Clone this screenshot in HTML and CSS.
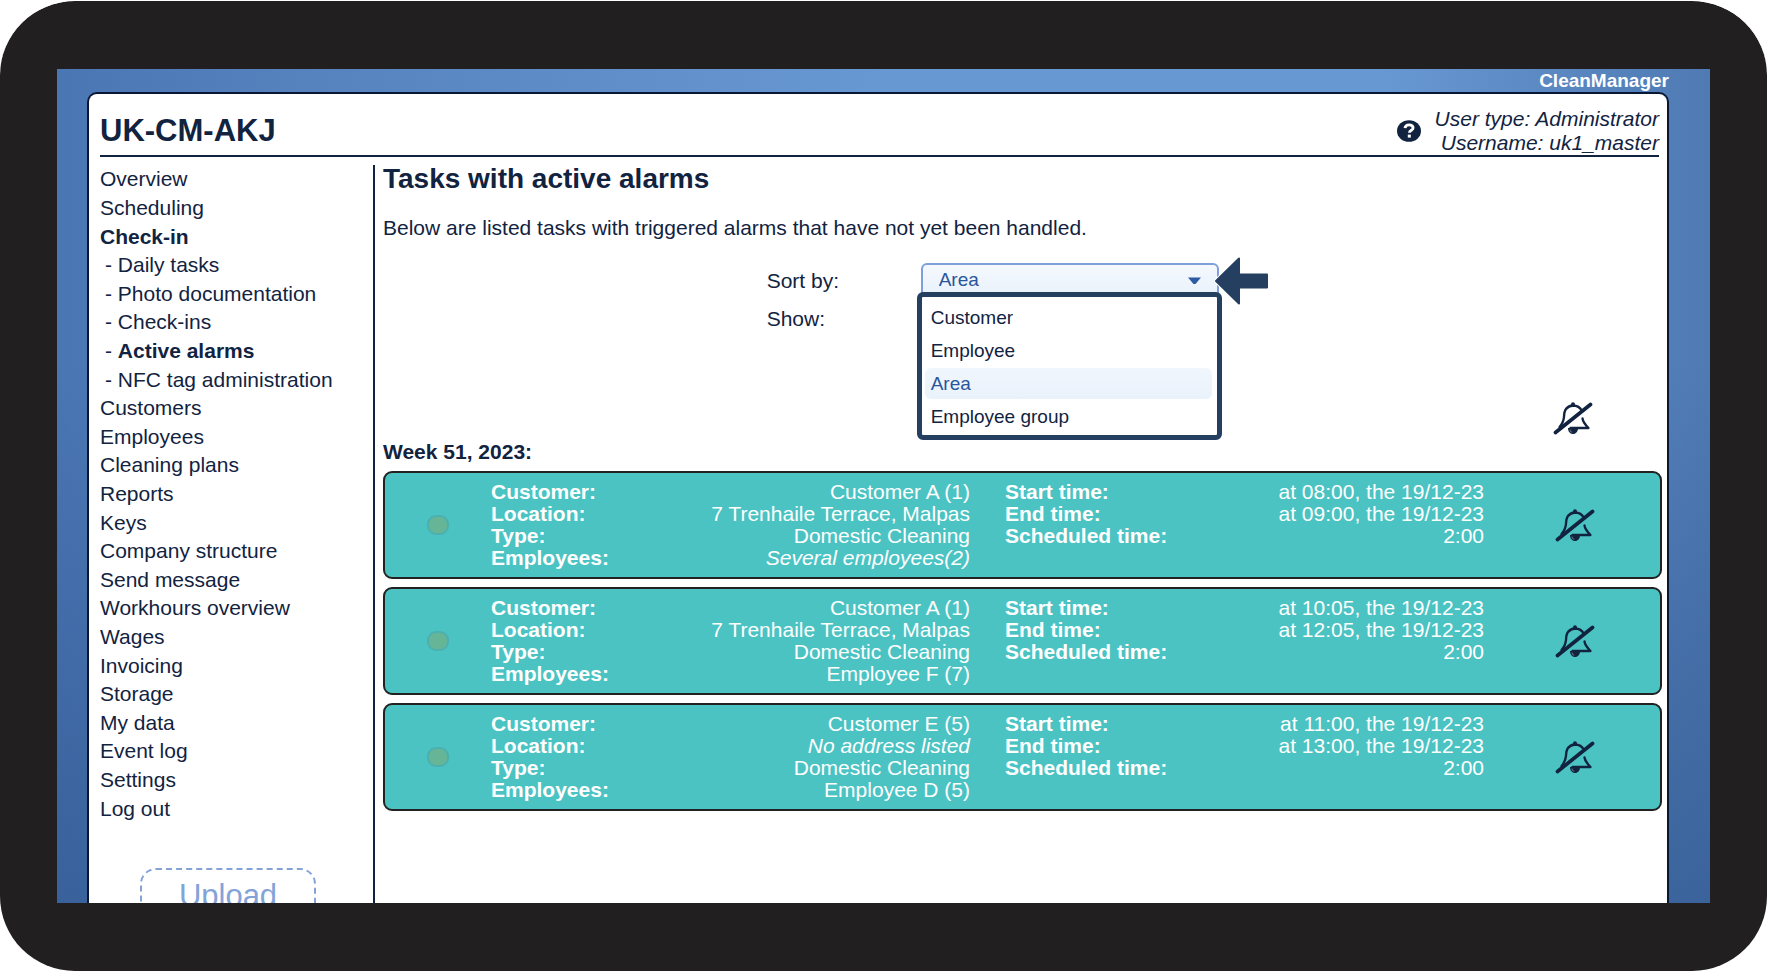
FILE: index.html
```
<!DOCTYPE html>
<html lang="en">
<head>
    <meta charset="utf-8">
    <title>CleanManager - Active alarms</title>
    <meta name="viewport" content="width=device-width, initial-scale=1">
    <link rel="stylesheet" href="styles.css">
</head>
<body>
    <svg class="sprite" width="0" height="0" aria-hidden="true">
        <symbol id="bell-off" viewBox="0 0 39 33">
            <g fill="none" stroke="currentColor" stroke-linecap="round" stroke-linejoin="round">
                <path stroke-width="2.300" d="M6 25C9 22 10 19 10.500 15C10.500 8 13 4 19.500 3.500C24 3.500 27 6 28.500 9"/>
                <path stroke-width="2.300" d="M29 16.500C29.500 20.500 32 23 35 26H17"/>
                <path stroke-width="3.700" d="M2 30.500L37 2.500"/>
            </g>
            <circle cx="19.500" cy="2.300" r="2" fill="currentColor"/>
            <path fill="currentColor" d="M14.500 26H24.500C24.500 29.500 22.500 32 19.500 32C16.500 32 14.500 29.500 14.500 26Z"/>
            <path fill="none" stroke="#fff" stroke-opacity=".6" stroke-width=".7" d="M16.500 27.500C16.700 29 17.500 30 18.700 30.500"/>
        </symbol>
    </svg>

    <div class="device">
        <div class="screen">
            <div class="brand">CleanManager</div>

            <div class="panel">
                <header class="header">
                    <h1 class="company">UK-CM-AKJ</h1>
                    <div class="user">
                        <button type="button" class="help" aria-label="Help">
                            <svg width="24" height="22" viewBox="0 0 24 22" aria-hidden="true">
                                <ellipse cx="12" cy="11" rx="12" ry="10.800" fill="#12233f"/>
                                <path d="M8 8.200C8.300 5.800 10 4.900 12 4.900C14.600 4.900 16.100 6.200 16.100 8C16.100 10.300 12.400 10.300 12.400 12.800" fill="none" stroke="#fff" stroke-width="2.800"/>
                                <rect x="10.800" y="14.600" width="3" height="3" fill="#fff"/>
                            </svg>
                        </button>
                        <p class="user-info">User type: Administrator<br>Username: uk1_master</p>
                    </div>
                </header>

                <div class="content">
                    <nav class="sidebar">
                        <ul class="menu">
                            <li><a href="#">Overview</a></li>
                            <li><a href="#">Scheduling</a></li>
                            <li><a href="#" class="active">Check-in</a></li>
                            <li class="sub">- <a href="#">Daily tasks</a></li>
                            <li class="sub">- <a href="#">Photo documentation</a></li>
                            <li class="sub">- <a href="#">Check-ins</a></li>
                            <li class="sub">- <a href="#" class="active">Active alarms</a></li>
                            <li class="sub">- <a href="#">NFC tag administration</a></li>
                            <li><a href="#">Customers</a></li>
                            <li><a href="#">Employees</a></li>
                            <li><a href="#">Cleaning plans</a></li>
                            <li><a href="#">Reports</a></li>
                            <li><a href="#">Keys</a></li>
                            <li><a href="#">Company structure</a></li>
                            <li><a href="#">Send message</a></li>
                            <li><a href="#">Workhours overview</a></li>
                            <li><a href="#">Wages</a></li>
                            <li><a href="#">Invoicing</a></li>
                            <li><a href="#">Storage</a></li>
                            <li><a href="#">My data</a></li>
                            <li><a href="#">Event log</a></li>
                            <li><a href="#">Settings</a></li>
                            <li><a href="#">Log out</a></li>
                        </ul>
                        <button type="button" class="upload">Upload</button>
                    </nav>

                    <main class="main">
                        <h2 class="title">Tasks with active alarms</h2>
                        <p class="intro">Below are listed tasks with triggered alarms that have not yet been handled.</p>

                        <form class="filters">
                            <label for="sort">Sort by:</label>
                            <div class="dropdown">
                                <select id="sort" class="select">
                                    <option>Customer</option>
                                    <option>Employee</option>
                                    <option selected>Area</option>
                                    <option>Employee group</option>
                                </select>
                                <svg class="caret" width="13" height="8" viewBox="0 0 13 8" aria-hidden="true">
                                    <path d="M0 .500H13L7.500 7H5.500Z" fill="#2f5ba3"/>
                                </svg>
                                <div class="options">
                                    <button type="button" class="option">Customer</button>
                                    <button type="button" class="option">Employee</button>
                                    <button type="button" class="option selected">Area</button>
                                    <button type="button" class="option">Employee group</button>
                                </div>
                                <svg class="pointer" width="56" height="50" viewBox="0 0 56 50" aria-hidden="true">
                                    <path d="M2 25L25 2.500V18.500H53V31.500H25V47.500Z" fill="#253f60" stroke="#fff" stroke-width="4" stroke-linejoin="round"/>
                                    <path d="M2 25L25 2.500V18.500H53V31.500H25V47.500Z" fill="#253f60" stroke="#253f60" stroke-width="2" stroke-linejoin="round"/>
                                </svg>
                            </div>
                            <label for="show">Show:</label>
                            <select id="show" class="select"></select>
                        </form>

                        <div class="all-alarms">
                            <button type="button" class="bell" aria-label="Turn off all alarms"><svg><use href="#bell-off"/></svg></button>
                        </div>

                        <h3 class="week">Week 51, 2023:</h3>

                        <section class="task">
                            <span class="dot"></span>
                            <dl class="details">
                                <dt>Customer:</dt><dd>Customer A (1)</dd>
                                <dt>Location:</dt><dd>7 Trenhaile Terrace, Malpas</dd>
                                <dt>Type:</dt><dd>Domestic Cleaning</dd>
                                <dt>Employees:</dt><dd><em>Several employees(2)</em></dd>
                            </dl>
                            <dl class="details">
                                <dt>Start time:</dt><dd>at 08:00, the 19/12-23</dd>
                                <dt>End time:</dt><dd>at 09:00, the 19/12-23</dd>
                                <dt>Scheduled time:</dt><dd>2:00</dd>
                            </dl>
                            <button type="button" class="bell" aria-label="Turn off alarm"><svg><use href="#bell-off"/></svg></button>
                        </section>

                        <section class="task">
                            <span class="dot"></span>
                            <dl class="details">
                                <dt>Customer:</dt><dd>Customer A (1)</dd>
                                <dt>Location:</dt><dd>7 Trenhaile Terrace, Malpas</dd>
                                <dt>Type:</dt><dd>Domestic Cleaning</dd>
                                <dt>Employees:</dt><dd>Employee F (7)</dd>
                            </dl>
                            <dl class="details">
                                <dt>Start time:</dt><dd>at 10:05, the 19/12-23</dd>
                                <dt>End time:</dt><dd>at 12:05, the 19/12-23</dd>
                                <dt>Scheduled time:</dt><dd>2:00</dd>
                            </dl>
                            <button type="button" class="bell" aria-label="Turn off alarm"><svg><use href="#bell-off"/></svg></button>
                        </section>

                        <section class="task">
                            <span class="dot"></span>
                            <dl class="details">
                                <dt>Customer:</dt><dd>Customer E (5)</dd>
                                <dt>Location:</dt><dd><em>No address listed</em></dd>
                                <dt>Type:</dt><dd>Domestic Cleaning</dd>
                                <dt>Employees:</dt><dd>Employee D (5)</dd>
                            </dl>
                            <dl class="details">
                                <dt>Start time:</dt><dd>at 11:00, the 19/12-23</dd>
                                <dt>End time:</dt><dd>at 13:00, the 19/12-23</dd>
                                <dt>Scheduled time:</dt><dd>2:00</dd>
                            </dl>
                            <button type="button" class="bell" aria-label="Turn off alarm"><svg><use href="#bell-off"/></svg></button>
                        </section>
                    </main>
                </div>
            </div>
        </div>
    </div>
</body>
</html>
```
FILE: styles.css
```
* {
    margin: 0;
    padding: 0;
    box-sizing: border-box;
}

body {
    font-family: "Liberation Sans", Arial, sans-serif;
    font-size: 21px;
    line-height: 24px;
    color: #12233f;
    background: #fff;
    overflow: hidden;
}

button,
select {
    font: inherit;
    color: inherit;
    background: none;
    border: none;
    cursor: pointer;
}

.sprite {
    position: absolute;
}

/* Tablet frame */
.device {
    height: 100vh;
    padding: 68px 57px;
    background: #221f20;
    border-top: 1px solid #fff;
    background-clip: padding-box;
    border-radius: 75px;
}

.screen {
    height: 100%;
    padding: 0 41px 0 30px;
    overflow: hidden;
    display: flex;
    flex-direction: column;
    background:
        linear-gradient(to bottom, rgba(50, 88, 145, 0) 35%, rgba(50, 88, 145, 0.7) 100%),
        linear-gradient(to right, #4a76b4 0%, #5582bd 14%, #6898d2 50%, #6898d2 80%, #4f7ab3 100%);
}

.brand {
    height: 23px;
    padding-top: 1px;
    font-size: 19px;
    line-height: 22px;
    font-weight: bold;
    text-align: right;
    color: #fff;
}

.panel {
    flex: 1 0 auto;
    padding: 0 5px 0 11px;
    background: #fff;
    border: 2px solid #0a1733;
    border-bottom: none;
    border-radius: 10px 10px 0 0;
}

.header {
    display: flex;
    justify-content: space-between;
    align-items: center;
    height: 63px;
    padding-top: 13px;
    margin-right: 3px;
    border-bottom: 2px solid #12233f;
}

.company {
    font-size: 31px;
    line-height: 36px;
}

.user {
    display: flex;
    align-items: center;
    gap: 14px;
}

.user-info {
    font-style: italic;
    text-align: right;
}

.help,
.help svg {
    display: block;
}

.content {
    display: flex;
    margin-top: 8px;
}

/* Sidebar */
.sidebar {
    flex: 0 0 273px;
}

.menu {
    display: grid;
    grid-auto-rows: 1fr;
    align-items: center;
    min-height: 658px;
    list-style: none;
}

.menu a {
    color: inherit;
    text-decoration: none;
}

.menu .sub {
    padding-left: 5px;
}

.menu .active {
    font-weight: bold;
}

.upload {
    display: block;
    width: 176px;
    margin: 45px 0 0 40px;
    padding: 8px 0 40px;
    font-size: 31px;
    line-height: 36px;
    color: #83a3d8;
    border: 2px dashed #83a3d8;
    border-radius: 16px;
}

/* Main column */
.main {
    flex: 1;
    padding-left: 8px;
    border-left: 2px solid #12233f;
}

.title {
    font-size: 28px;
    line-height: 28px;
}

.intro {
    margin-top: 23px;
}

.filters {
    display: grid;
    grid-template-columns: 154px 298px;
    grid-auto-rows: 36px;
    row-gap: 2px;
    align-items: center;
    margin: 23px 0 0 30%;
}

.dropdown {
    position: relative;
}

.select {
    display: block;
    width: 100%;
    height: 36px;
    padding: 0 16px 2px;
    font-size: 19px;
    color: #2a559c;
    background: linear-gradient(#f5f9fe, #e8f1fb);
    border: 2px solid #7d9fda;
    border-radius: 6px;
    appearance: none;
}

.caret {
    position: absolute;
    right: 18px;
    top: 14px;
}

.options {
    position: absolute;
    top: 29px;
    left: -4px;
    right: -3px;
    z-index: 1;
    display: grid;
    gap: 2px;
    padding: 5px 5px 3px 3px;
    background: #fff;
    border: 5px solid #253f60;
    border-radius: 6px;
}

.option {
    height: 31px;
    padding: 0 6px;
    font-size: 19px;
    text-align: left;
    border-radius: 6px;
}

.option.selected {
    color: #2a559c;
    background: linear-gradient(#f1f6fd, #e9f2fb);
}

.pointer {
    position: absolute;
    top: -7px;
    left: 293px;
    z-index: 2;
}

.all-alarms {
    display: flex;
    justify-content: flex-end;
    margin: 65px 69px 0 0;
}

.bell,
.bell svg {
    display: block;
    width: 40px;
    height: 33px;
}

.week {
    margin: 5px 0 7px;
    font-size: 21px;
}

/* Task cards */
.task {
    display: grid;
    grid-template-columns: 106fr 479fr 35fr 479fr 176fr;
    min-height: 108px;
    margin-bottom: 8px;
    align-items: center;
    justify-items: center;
    background: #4bc3c3;
    border: 2px solid #222;
    border-radius: 9px;
}

.task .bell {
    margin-left: 5px;
}

.dot {
    width: 22px;
    height: 20px;
    background: #66b597;
    border: 2px solid #4cb0ae;
    border-radius: 9px;
}

.details {
    display: grid;
    grid-template-columns: auto 1fr;
    align-self: start;
    justify-self: stretch;
    padding-top: 8px;
    line-height: 22px;
    color: #fff;
}

.details + .details {
    grid-column: 4;
}

.details dt {
    font-weight: bold;
}

.details dd {
    text-align: right;
}
```
